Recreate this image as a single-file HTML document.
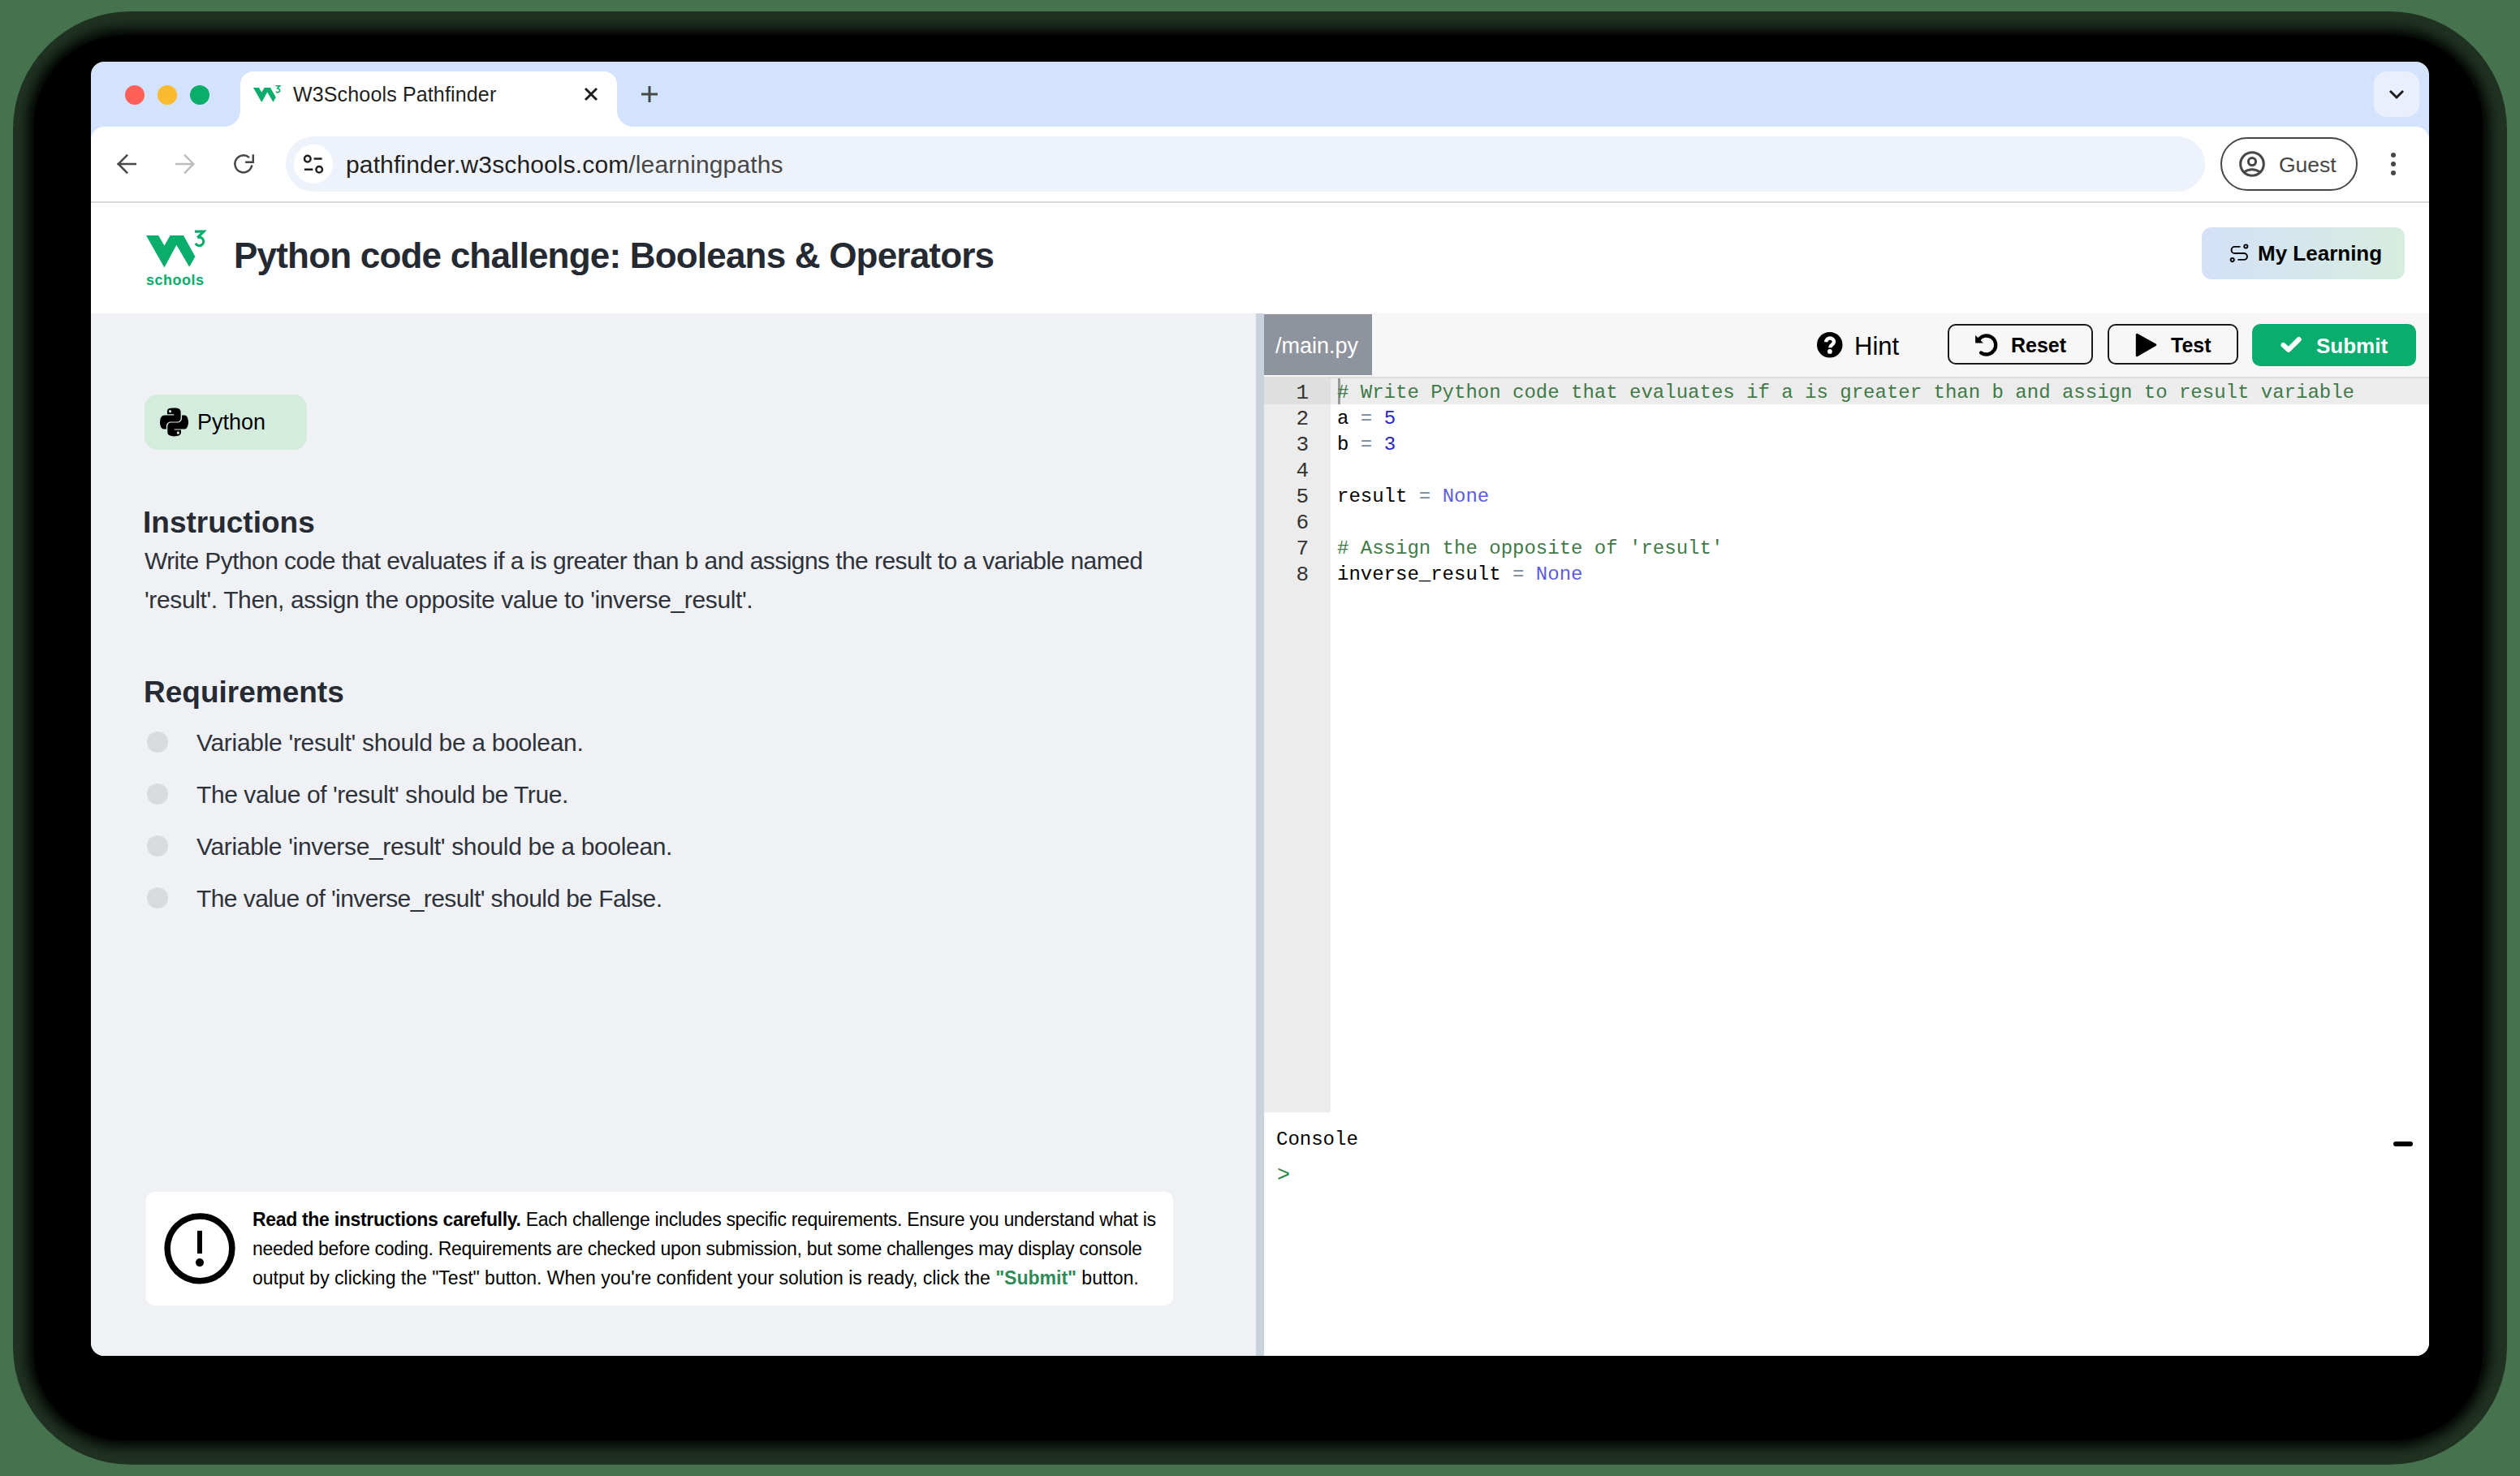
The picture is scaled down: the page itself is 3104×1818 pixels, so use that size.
<!DOCTYPE html>
<html><head><meta charset="utf-8">
<style>
html,body{margin:0;padding:0;}
body{width:3104px;height:1818px;overflow:hidden;position:relative;background:#47724e;font-family:"Liberation Sans",sans-serif;}
.abs{position:absolute;}
#shA{position:absolute;left:16px;top:13.5px;width:3072px;height:1790.5px;border-radius:145px;background:rgba(0,0,0,0.55);}
#shadow{position:absolute;left:42px;top:44px;width:3016px;height:1730px;background:#000;border-radius:110px;box-shadow:0 0 16px 8px #000;}
#win{position:absolute;left:112px;top:76px;width:2880px;height:1594px;border-radius:16px;overflow:hidden;background:#d4e3fd;}
.t{position:absolute;white-space:nowrap;line-height:1;}
svg{position:absolute;overflow:visible;}
</style></head>
<body>
<div id="shA"></div>
<div id="shadow"></div>
<div id="win">
  <!-- tab strip -->
  <div class="abs" style="left:42px;top:29px;width:24px;height:24px;border-radius:50%;background:#fe5f57"></div>
  <div class="abs" style="left:82px;top:29px;width:24px;height:24px;border-radius:50%;background:#fcba2e"></div>
  <div class="abs" style="left:122px;top:29px;width:24px;height:24px;border-radius:50%;background:#0aad6a"></div>
  <!-- active tab -->
  <div class="abs" style="left:184px;top:12px;width:464px;height:70px;background:#fff;border-radius:16px 16px 0 0"></div>
  <svg style="left:164px;top:60px" width="20" height="20"><path d="M0 20 A20 20 0 0 0 20 0 L20 20 Z" fill="#fff"/></svg>
  <svg style="left:648px;top:60px" width="20" height="20"><path d="M20 20 A20 20 0 0 1 0 0 L0 20 Z" fill="#fff"/></svg>
  <svg style="left:200px;top:31.9px" width="40" height="30"><g transform="scale(0.46)" fill="#0aad6b"><path d="M0 0H15.2L22.4 12.6L29.6 0H46L60.4 25.9L53.2 38.8L37.4 11.8L22.4 39.4Z"/><path d="M60 -4.95H71L63.3 2.7A5.2 5.2 0 1 1 60.9 9.8" fill="none" stroke="#0aad6b" stroke-width="3.4"/></g></svg>
  <div class="t" style="left:249px;top:28px;font-size:25px;letter-spacing:0.15px;color:#1f1f1f">W3Schools Pathfinder</div>
  <svg style="left:608px;top:32px" width="16" height="16"><path d="M1 1L15 15M15 1L1 15" stroke="#1f1f1f" stroke-width="2.9" stroke-linecap="butt"/></svg>
  <svg style="left:678px;top:30px" width="20" height="20"><path d="M10 0V20M0 10H20" stroke="#474747" stroke-width="3"/></svg>
  <div class="abs" style="left:2812px;top:12px;width:56px;height:56px;border-radius:16px;background:#e9effb"></div>
  <svg style="left:2830px;top:34px" width="20" height="14"><path d="M2 2L10 10L18 2" stroke="#1f1f1f" stroke-width="3" fill="none"/></svg>

  <!-- toolbar -->
  <div class="abs" style="left:0;top:80px;width:2880px;height:94px;background:#fff;border-radius:16px 16px 0 0"></div>
  <div class="abs" style="left:0;top:172px;width:2880px;height:2px;background:#d9d9d9"></div>
  <div class="abs" style="left:240px;top:92px;width:2364px;height:68px;border-radius:34px;background:#eef2fb"></div>
  <div class="abs" style="left:250px;top:102px;width:48px;height:48px;border-radius:50%;background:#fff"></div>
  <svg style="left:0;top:0" width="1" height="1">
    <g fill="none" stroke-width="2.5">
      <path d="M32.3 125.9H56M45.1 114.6L33.8 125.9L45.1 137.3" stroke="#474747"/>
      <path d="M104 125.9H126.5M115.1 114.6L126.4 125.9L115.1 137.3" stroke="#bdbdbd"/>
      <path d="M195 118.1A10.5 10.5 0 1 0 198.3 127.4" stroke="#474747"/>
      <path d="M190.1 123.7H199.8V114.2" stroke="#474747"/>
      <circle cx="266.8" cy="119.6" r="3.8" stroke="#1f1f1f"/><path d="M274.6 119.6H284.6M262.9 132.7H273.4" stroke="#1f1f1f"/><circle cx="281.2" cy="132.7" r="3.8" stroke="#1f1f1f"/>
    </g>
  </svg>
  <div class="t" style="left:314px;top:112px;font-size:30px;letter-spacing:0.13px;color:#1f1f1f">pathfinder.w3schools.com<span style="color:#474747">/learningpaths</span></div>
  <div class="abs" style="left:2623px;top:93px;width:165px;height:62px;border-radius:33px;border:2px solid #474747"></div>
  <svg style="left:0;top:0" width="1" height="1"><g fill="none" stroke="#474747" stroke-width="3.1"><circle cx="2662" cy="126" r="14.3"/><circle cx="2662" cy="123.1" r="4.6"/><path d="M2651.5 136.5Q2662 129 2672.5 136.5"/></g></svg>
  <div class="t" style="left:2695px;top:114px;font-size:26.5px;color:#474747">Guest</div>
  <div class="abs" style="left:2833px;top:112px;width:6px;height:6px;border-radius:50%;background:#474747"></div>
  <div class="abs" style="left:2833px;top:123px;width:6px;height:6px;border-radius:50%;background:#474747"></div>
  <div class="abs" style="left:2833px;top:134px;width:6px;height:6px;border-radius:50%;background:#474747"></div>

  <!-- page header -->
  <div class="abs" style="left:0;top:174px;width:2880px;height:136px;background:#fff"></div>
  <svg style="left:68px;top:214.3px" width="80" height="70"><g fill="#0aad6b"><path d="M0 0H15.2L22.4 12.6L29.6 0H46L60.4 25.9L53.2 38.8L37.4 11.8L22.4 39.4Z"/><path d="M60 -4.95H71L63.3 2.7A5.2 5.2 0 1 1 60.9 9.8" fill="none" stroke="#0aad6b" stroke-width="3.2"/></g></svg>
  <div class="t" style="left:68px;top:259.5px;font-size:18px;font-weight:bold;letter-spacing:0.5px;color:#0aad6b">schools</div>
  <div class="t" style="left:176px;top:217px;font-size:44px;letter-spacing:-0.8px;font-weight:bold;color:#252932">Python code challenge: Booleans &amp; Operators</div>
  <div class="abs" style="left:2600px;top:204px;width:250px;height:64px;border-radius:12px;background:linear-gradient(90deg,#d4e1f8,#d6eddf)"></div>
  <svg style="left:2628px;top:219px" width="35" height="35"><g fill="none" stroke="#000" stroke-width="1.9"><circle cx="26.3" cy="8.5" r="2.1"/><circle cx="9.7" cy="25.1" r="2.1"/><path d="M19.4 8.9H12.6A4.05 4.05 0 0 0 12.6 17H24A3.95 3.95 0 0 1 24 24.9H16.4"/></g></svg>
  <div class="t" style="left:2669px;top:223px;font-size:26px;font-weight:bold;color:#000">My Learning</div>

  <!-- content -->
  <div class="abs" style="left:0;top:310px;width:1435px;height:1284px;background:#eff1f5"></div>
  <div class="abs" style="left:1435px;top:310px;width:10px;height:1284px;background:#c9d3dd"></div>
  <div class="abs" style="left:1445px;top:310px;width:1435px;height:1284px;background:#fff"></div>

  <div class="abs" style="left:66px;top:410px;width:200px;height:68px;border-radius:16px;background:#d4ecdd"></div>
  <svg style="left:84.6px;top:423.8px" width="35" height="40" viewBox="0 0 448 512"><path fill="#000" d="M439.8 200.5c-7.7-30.9-22.3-54.2-53.4-54.2h-40.1v47.4c0 36.8-31.2 67.8-66.8 67.8H172.7c-29.2 0-53.4 25-53.4 54.3v101.8c0 29 25.2 46 53.4 54.3 33.800 9.9 66.3 11.7 106.8 0 26.9-7.8 53.4-23.5 53.4-54.3v-40.7H226.2v-13.6h160.2c31.1 0 42.6-21.7 53.4-54.2 11.2-33.5 10.7-65.7 0-108.6zM286.2 404c11.1 0 20.1 9.1 20.1 20.300 0 11.3-9 20.4-20.1 20.4-11 0-20.1-9.2-20.1-20.4.1-11.3 9.1-20.3 20.1-20.3zM167.8 248.1h106.8c29.7 0 53.4-24.5 53.4-54.3V91.9c0-29-24.4-50.7-53.4-55.6-35.8-5.9-74.7-5.6-106.8.1-45.2 8-53.4 24.7-53.4 55.6v40.7h106.9v13.6h-147c-31.1 0-58.300 18.7-66.8 54.2-9.8 40.7-10.2 66.1 0 108.6 7.6 31.6 25.7 54.2 56.8 54.2H101v-48.8c0-35.3 30.5-66.4 66.8-66.4zm-6.7-142.6c-11.100 0-20.1-9.1-20.1-20.3.1-11.3 9-20.4 20.1-20.4 11 0 20.1 9.2 20.1 20.4s-9 20.3-20.1 20.3z"/></svg>
  <div class="t" style="left:131px;top:431px;font-size:27px;color:#000">Python</div>

  <div class="t" style="left:64px;top:549px;font-size:37px;font-weight:bold;color:#262a33">Instructions</div>
  <div class="t" style="left:66px;top:591px;font-size:30px;line-height:48px;color:#2e323a"><span style="letter-spacing:-0.57px">Write Python code that evaluates if a is greater than b and assigns the result to a variable named</span><br><span style="letter-spacing:-0.38px">'result'. Then, assign the opposite value to 'inverse_result'.</span></div>

  <div class="t" style="left:65px;top:758px;font-size:37px;font-weight:bold;color:#262a33">Requirements</div>
  <div class="abs" style="left:69px;top:825px;width:26px;height:26px;border-radius:50%;background:#d9dcdf"></div>
  <div class="abs" style="left:69px;top:889px;width:26px;height:26px;border-radius:50%;background:#d9dcdf"></div>
  <div class="abs" style="left:69px;top:953px;width:26px;height:26px;border-radius:50%;background:#d9dcdf"></div>
  <div class="abs" style="left:69px;top:1017px;width:26px;height:26px;border-radius:50%;background:#d9dcdf"></div>
  <div class="t" style="left:130px;top:824px;font-size:30px;letter-spacing:-0.3px;color:#2e323a">Variable 'result' should be a boolean.</div>
  <div class="t" style="left:130px;top:888px;font-size:30px;letter-spacing:-0.42px;color:#2e323a">The value of 'result' should be True.</div>
  <div class="t" style="left:130px;top:952px;font-size:30px;letter-spacing:-0.33px;color:#2e323a">Variable 'inverse_result' should be a boolean.</div>
  <div class="t" style="left:130px;top:1016px;font-size:30px;letter-spacing:-0.58px;color:#2e323a">The value of 'inverse_result' should be False.</div>

  <div class="abs" style="left:68px;top:1392px;width:1265px;height:140px;border-radius:10px;background:#fff"></div>
  <svg style="left:0;top:0" width="1" height="1"><circle cx="134" cy="1461.8" r="39.85" fill="none" stroke="#000" stroke-width="7.5"/><rect x="131" y="1439.9" width="6" height="28.1" fill="#000"/><circle cx="134" cy="1479.1" r="5" fill="#000"/></svg>
  <div class="t" style="left:199px;top:1408px;font-size:23px;line-height:36px;color:#000"><span style="letter-spacing:-0.32px"><b>Read the instructions carefully.</b> Each challenge includes specific requirements. Ensure you understand what is</span><br><span style="letter-spacing:-0.3px">needed before coding. Requirements are checked upon submission, but some challenges may display console</span><br>output by clicking the "Test" button. When you're confident your solution is ready, click the <b style="color:#2f8a57">"Submit"</b> button.</div>

  <!-- editor header -->
  <div class="abs" style="left:1445px;top:310px;width:1435px;height:78px;background:#f7f7f7"></div>
  <div class="abs" style="left:1445px;top:388px;width:1435px;height:2px;background:#dddddd"></div>
  <div class="abs" style="left:1445px;top:311px;width:133px;height:75px;background:#8e949e"></div>
  <div class="t" style="left:1459px;top:337px;font-size:27px;color:#fff">/main.py</div>
  <svg style="left:2126.1px;top:333.1px" width="32" height="32"><circle cx="15.75" cy="15.75" r="15.75" fill="#000"/><path d="M11.3 12.3A4.8 4.8 0 0 1 20.9 12.3C20.9 15 16.2 15.6 16.2 19.3" fill="none" stroke="#fff" stroke-width="4.4"/><circle cx="15.9" cy="23.9" r="2.9" fill="#fff"/></svg>
  <div class="t" style="left:2172px;top:335px;font-size:31px;color:#000">Hint</div>
  <div class="abs" style="left:2287px;top:323px;width:175px;height:46px;border-radius:10px;border:2.5px solid #1a1a1a"></div>
  <svg style="left:0;top:0" width="1" height="1"><path d="M2325.3 342.4A11.5 11.5 0 1 1 2328.1 358.4" fill="none" stroke="#000" stroke-width="4.3" stroke-linecap="round"/><path d="M2321.1 337.1V346.6H2330.9Z" fill="#000"/>
  <path d="M2520.3 336.3V361.7L2542.8 348.7Z" fill="#000" stroke="#000" stroke-width="3" stroke-linejoin="round"/></svg>
  <div class="t" style="left:2365px;top:337px;font-size:25px;font-weight:bold;color:#000">Reset</div>
  <div class="abs" style="left:2484px;top:323px;width:156.5px;height:46px;border-radius:10px;border:2.5px solid #1a1a1a"></div>
  <div class="t" style="left:2562px;top:337px;font-size:25px;font-weight:bold;color:#000">Test</div>
  <div class="abs" style="left:2662px;top:323px;width:202px;height:52px;border-radius:10px;background:#0aad6e"></div>
  <div class="t" style="left:2741px;top:337px;font-size:26px;font-weight:bold;color:#fff">Submit</div>
  <svg style="left:0;top:0" width="1" height="1"><path d="M2700.5 349L2706.8 354.8L2719.7 342" fill="none" stroke="#fff" stroke-width="6" stroke-linecap="round" stroke-linejoin="round"/></svg>

  <!-- code -->
  <div class="abs" style="left:1445px;top:390px;width:82px;height:904px;background:#ececec"></div>
  <div class="abs" style="left:1445px;top:390px;width:1435px;height:32px;background:#ececec"></div>
  <div class="abs" style="left:1445px;top:390px;width:82px;height:32px;background:#dfdfdf"></div>
  <div class="abs" style="left:1536px;top:390px;width:3px;height:32px;background:#9a9a9a"></div>
  <div class="t" style="left:1445px;top:392px;width:55px;text-align:right;font-family:'Liberation Mono',monospace;font-size:26px;line-height:32px;color:#333">1<br>2<br>3<br>4<br>5<br>6<br>7<br>8</div>
  <div class="t" style="left:1535px;top:392px;font-family:'Liberation Mono',monospace;font-size:24px;line-height:32px;color:#000"><span style="color:#3f7a48"># Write Python code that evaluates if a is greater than b and assign to result variable</span><br>a <span style="color:#778899">=</span> <span style="color:#2828c8">5</span><br>b <span style="color:#778899">=</span> <span style="color:#2828c8">3</span><br><br>result <span style="color:#778899">=</span> <span style="color:#5c5ce0">None</span><br><br><span style="color:#3f7a48"># Assign the opposite of 'result'</span><br>inverse_result <span style="color:#778899">=</span> <span style="color:#5c5ce0">None</span></div>

  <!-- console -->
  <div class="t" style="left:1460px;top:1315.5px;font-family:'Liberation Mono',monospace;font-size:24px;color:#000">Console</div>
  <div class="t" style="left:1461px;top:1359px;font-family:'Liberation Mono',monospace;font-size:27px;color:#2a8a4a">&gt;</div>
  <div class="abs" style="left:2836px;top:1330px;width:24px;height:6px;border-radius:3px;background:#000"></div>
</div>
</body></html>
